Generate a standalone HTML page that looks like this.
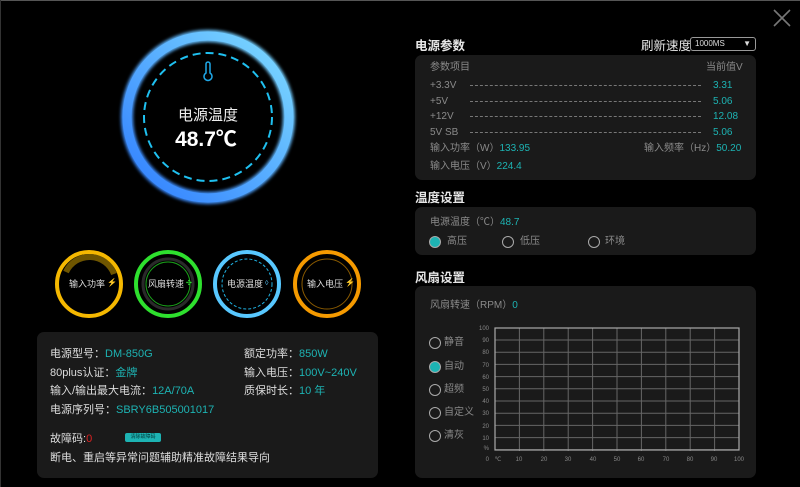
<!DOCTYPE html>
<html><head><meta charset="utf-8"><style>
*{margin:0;padding:0;box-sizing:border-box}
body{width:800px;height:487px;background:#000;position:relative;overflow:hidden;font-family:"Liberation Sans","Noto Sans CJK SC",sans-serif;color:#ddd}
.a{position:absolute;white-space:nowrap}
.panel{position:absolute;background:#1a1a1a;border-radius:7px}
.c{color:#1db3b3}
.g{color:#8a8a8a}
.t{font-size:12.5px;color:#e6e6e6;font-weight:bold;line-height:14px}
.s{font-size:10px;line-height:12px}
.dash{position:absolute;height:0;border-top:1px dashed #777}
.rad{position:absolute;width:12px;height:12px;border:1.5px solid #aaa;border-radius:50%}
.rad.on{background:#1db3b3;border-color:#aaa}
.lb{line-height:12px}
</style></head><body>
<div class="a" style="left:0;top:0;width:800px;height:1px;background:#555"></div>
<div class="a" style="left:0;top:0;width:1px;height:487px;background:#333"></div>
<svg class="a" style="left:772px;top:8px" width="20" height="20"><path d="M2 2L18 18M18 2L2 18" stroke="#777" stroke-width="1.6"/></svg>

<svg class="a" style="left:0;top:0" width="400" height="330">
<defs>
<linearGradient id="bg" x1="0" y1="1" x2="1" y2="0"><stop offset="0" stop-color="#2f7dff"/><stop offset="1" stop-color="#7fdcff"/></linearGradient>
<filter id="gl"><feGaussianBlur stdDeviation="1.5"/></filter>
</defs>
<circle cx="208" cy="117" r="81" fill="none" stroke="url(#bg)" stroke-width="12" filter="url(#gl)"/>
<circle cx="208" cy="117" r="81" fill="none" stroke="url(#bg)" stroke-width="9"/>
<circle cx="208" cy="117" r="64" fill="none" stroke="#1fc0f0" stroke-width="2" stroke-dasharray="8 5"/>
<path d="M206 64v9a4 4 0 1 0 4 0v-9a2 2 0 0 0-4 0z" fill="none" stroke="#1fa8e8" stroke-width="1.5"/>
<text x="208" y="120" text-anchor="middle" font-size="15" fill="#eee" font-family="Liberation Sans,Noto Sans CJK SC,sans-serif">电源温度</text>
<text x="206" y="146" text-anchor="middle" font-size="21" font-weight="bold" fill="#fff" font-family="Liberation Sans,Noto Sans CJK SC,sans-serif">48.7℃</text>

<circle cx="89" cy="284" r="32" fill="none" stroke="#f5b800" stroke-width="4"/>
<path d="M66 272A26 26 0 0 1 114 274" fill="none" stroke="#8a6a00" stroke-width="6" opacity="0.8"/>
<circle cx="168" cy="284" r="32" fill="none" stroke="#2ee02e" stroke-width="4"/>
<circle cx="168" cy="284" r="25" fill="none" stroke="#2a2a2a" stroke-width="3"/>
<circle cx="168" cy="284" r="22" fill="none" stroke="#1aa01a" stroke-width="1"/>
<circle cx="247" cy="284" r="32" fill="none" stroke="#58c8ff" stroke-width="4"/>
<circle cx="247" cy="284" r="25" fill="none" stroke="#1fb0e0" stroke-width="1" stroke-dasharray="3 2"/>
<circle cx="327" cy="284" r="32" fill="none" stroke="#f59a00" stroke-width="4"/>
<circle cx="327" cy="284" r="25" fill="none" stroke="#8a5a00" stroke-width="1"/>
<g font-size="9" fill="#ddd" text-anchor="middle" font-family="Liberation Sans,Noto Sans CJK SC,sans-serif">
<text x="87" y="287">输入功率</text><text x="166" y="287">风扇转速</text><text x="245" y="287">电源温度</text><text x="325" y="287">输入电压</text></g>
<text x="107" y="285" font-size="8" fill="#f5b800">⚡</text>
<text x="186" y="285" font-size="7" fill="#2ee02e">✣</text>
<text x="265" y="285" font-size="7" fill="#58c8ff">◊</text>
<text x="345" y="285" font-size="8" fill="#f5b800">⚡</text>
</svg>

<div class="panel" style="left:37px;top:332px;width:341px;height:146px"></div>
<div class="a" style="left:50px;top:345px;font-size:11px;line-height:18.5px">电源型号：<span class="c">DM-850G</span><br>80plus认证：<span class="c">金牌</span><br>输入/输出最大电流：<span class="c">12A/70A</span><br>电源序列号：<span class="c">SBRY6B505001017</span></div>
<div class="a" style="left:244px;top:345px;font-size:11px;line-height:18.5px">额定功率：<span class="c">850W</span><br>输入电压：<span class="c">100V~240V</span><br>质保时长：<span class="c">10 年</span></div>
<div class="a" style="left:50px;top:430px;font-size:11px">故障码:<span style="color:#d22">0</span></div>
<div class="a" style="left:125px;top:433px;width:36px;height:9px;background:#1db3b3;border-radius:2px;font-size:5px;color:#033;text-align:center;line-height:9px">清除故障码</div>
<div class="a" style="left:50px;top:449px;font-size:11px">断电、重启等异常问题辅助精准故障结果导向</div>

<div class="a t" style="left:415px;top:39px">电源参数</div>
<div class="a t" style="left:641px;top:39px;font-weight:normal">刷新速度</div>
<div class="a" style="left:690px;top:37px;width:66px;height:14px;border:1px solid #999;border-radius:3px;font-size:8px;line-height:12px;padding-left:4px">1000MS<span style="position:absolute;right:4px;top:0;font-size:8px">▼</span></div>
<div class="panel" style="left:415px;top:55px;width:341px;height:125px"></div>
<div class="a g s" style="left:430px;top:62px">参数项目</div>
<div class="a g s" style="left:706px;top:62px">当前值V</div>
<div class="a g s" style="left:430px;top:78px;line-height:15.7px">+3.3V<br>+5V<br>+12V<br>5V SB</div>
<div class="dash" style="left:470px;top:85px;width:231px"></div>
<div class="dash" style="left:470px;top:101px;width:231px"></div>
<div class="dash" style="left:470px;top:116px;width:231px"></div>
<div class="dash" style="left:470px;top:132px;width:231px"></div>
<div class="a c s" style="left:713px;top:78px;line-height:15.7px">3.31<br>5.06<br>12.08<br>5.06</div>
<div class="a s" style="left:430px;top:143px"><span class="g">输入功率（W）</span><span class="c">133.95</span></div>
<div class="a s" style="left:644px;top:143px"><span class="g">输入频率（Hz）</span><span class="c">50.20</span></div>
<div class="a s" style="left:430px;top:161px"><span class="g">输入电压（V）</span><span class="c">224.4</span></div>

<div class="a t" style="left:415px;top:191px">温度设置</div>
<div class="panel" style="left:415px;top:207px;width:341px;height:48px"></div>
<div class="a s" style="left:430px;top:217px"><span class="g">电源温度（℃）</span><span class="c">48.7</span></div>
<div class="rad on" style="left:429px;top:236px"></div><div class="a g s" style="left:447px;top:236px">高压</div>
<div class="rad" style="left:502px;top:236px"></div><div class="a g s" style="left:520px;top:236px">低压</div>
<div class="rad" style="left:588px;top:236px"></div><div class="a g s" style="left:605px;top:236px">环境</div>

<div class="a t" style="left:415px;top:271px">风扇设置</div>
<div class="panel" style="left:415px;top:286px;width:341px;height:192px"></div>
<div class="a s" style="left:430px;top:300px"><span class="g">风扇转速（RPM）</span><span class="c">0</span></div>
<div class="rad" style="left:429px;top:337px"></div><div class="a g s" style="left:444px;top:337px">静音</div>
<div class="rad on" style="left:429px;top:361px"></div><div class="a g s" style="left:444px;top:361px">自动</div>
<div class="rad" style="left:429px;top:384px"></div><div class="a g s" style="left:444px;top:384px">超频</div>
<div class="rad" style="left:429px;top:407px"></div><div class="a g s" style="left:444px;top:407px">自定义</div>
<div class="rad" style="left:429px;top:430px"></div><div class="a g s" style="left:444px;top:430px">清灰</div>
<svg class="a" style="left:470px;top:320px" width="280" height="145" font-family="Liberation Sans,sans-serif">
<g stroke="#666" stroke-width="1">
<line x1="25" y1="20" x2="269" y2="20"/><line x1="25" y1="32.2" x2="269" y2="32.2"/><line x1="25" y1="44.4" x2="269" y2="44.4"/><line x1="25" y1="56.6" x2="269" y2="56.6"/><line x1="25" y1="68.8" x2="269" y2="68.8"/><line x1="25" y1="81" x2="269" y2="81"/><line x1="25" y1="93.2" x2="269" y2="93.2"/><line x1="25" y1="105.4" x2="269" y2="105.4"/><line x1="25" y1="117.6" x2="269" y2="117.6"/><line x1="25" y1="129.8" x2="269" y2="129.8"/>
<line x1="49.4" y1="8" x2="49.4" y2="142"/><line x1="73.8" y1="8" x2="73.8" y2="142"/><line x1="98.2" y1="8" x2="98.2" y2="142"/><line x1="122.6" y1="8" x2="122.6" y2="142"/><line x1="147" y1="8" x2="147" y2="142"/><line x1="171.4" y1="8" x2="171.4" y2="142"/><line x1="195.8" y1="8" x2="195.8" y2="142"/><line x1="220.2" y1="8" x2="220.2" y2="142"/><line x1="244.6" y1="8" x2="244.6" y2="142"/>
</g>
<rect x="25" y="8" width="244" height="122" fill="none" stroke="#aaa" stroke-width="1.2"/>
<rect x="0" y="131" width="280" height="14" fill="#1a1a1a"/>
<g font-size="6" fill="#888" text-anchor="end">
<text x="19" y="10">100</text><text x="19" y="22">90</text><text x="19" y="34">80</text><text x="19" y="47">70</text><text x="19" y="59">60</text><text x="19" y="71">50</text><text x="19" y="83">40</text><text x="19" y="95">30</text><text x="19" y="108">20</text><text x="19" y="120">10</text><text x="19" y="130">%</text><text x="19" y="141">0</text></g>
<g font-size="6" fill="#888" text-anchor="middle">
<text x="28" y="141">℃</text><text x="49" y="141">10</text><text x="74" y="141">20</text><text x="98" y="141">30</text><text x="123" y="141">40</text><text x="147" y="141">50</text><text x="171" y="141">60</text><text x="196" y="141">70</text><text x="220" y="141">80</text><text x="244" y="141">90</text><text x="269" y="141">100</text></g>
</svg>
</body></html>
